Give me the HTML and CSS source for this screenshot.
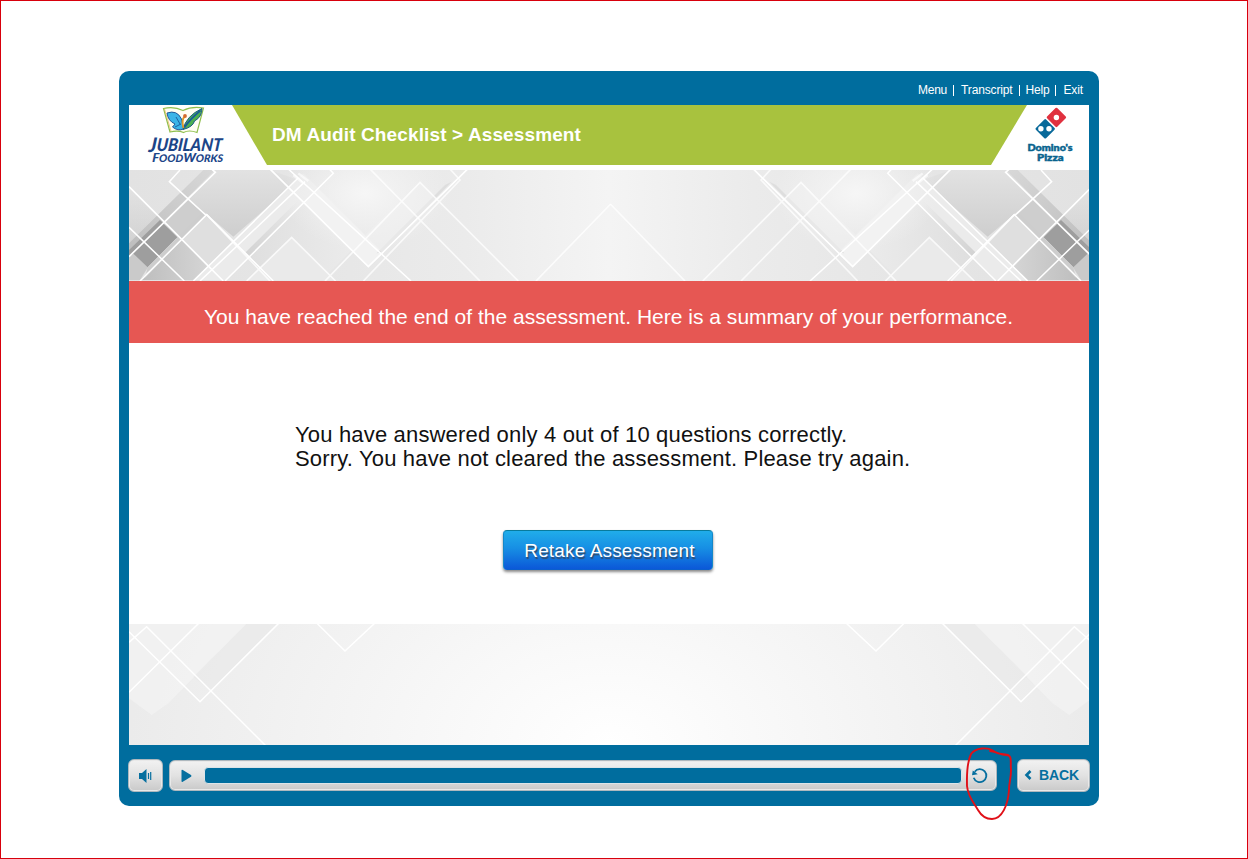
FILE: index.html
```
<!DOCTYPE html>
<html lang="en">
<head>
<meta charset="utf-8">
<title>DM Audit Checklist</title>
<link rel="stylesheet" href="styles.css">
</head>
<body>
<main class="page">
  <div class="player">
    <nav class="topnav">
      <span class="nav-menu">Menu</span><i></i><span class="nav-transcript">Transcript</span><i></i><span class="nav-help">Help</span><i></i><span class="nav-exit">Exit</span>
    </nav>
    <section class="stage">
      <header class="header">
        <svg class="logo-left" width="138" height="65" viewBox="129 105 138 65">
          <path d="M163.500 108.500Q174 106 183 110.500Q192 106 203.500 108L197 132.500Q189 129.500 183.500 132.500Q178 130 170 132Z" fill="#fffef2" stroke="#8fbf4d" stroke-width="1.200"/>
          <path d="M164.500 109L171 131" stroke="#e9b45b" stroke-width=".7"/>
          <path d="M167 113Q177 109.500 181.500 119L183.500 129Q178 131.500 172.500 127L175 124Q168 121 167 113Z" fill="#3bb4e8" stroke="#174b8d" stroke-width=".9"/>
          <path d="M176 117L180 124M175 127L181 124" stroke="#174b8d" stroke-width=".8"/>
          <path d="M183 129.500Q186 116 202 108.500Q202 117 194.500 121Q193 127 183 129.500Z" fill="#4caf50" stroke="#1a5a86" stroke-width="1"/>
          <path d="M184 128Q190 119 200.500 110.500" stroke="#175b98" stroke-width="1.700" fill="none"/>
          <path d="M183.500 128Q181 120 185 116" stroke="#dc9a2b" stroke-width="1.800" fill="none"/><circle cx="185" cy="116" r="1.900" fill="#d56a2d"/>
          <g class="jubilant">
            <text x="0" y="0" font-size="17.500" transform="translate(148.500 150.500) skewX(-6)" textLength="73" lengthAdjust="spacingAndGlyphs"><tspan font-size="20" dy="1.500">J</tspan><tspan dy="-1.500">UBILANT</tspan></text>
            <text x="0" y="0" font-size="12.500" transform="translate(152 161.800) skewX(-4)" textLength="71" lengthAdjust="spacingAndGlyphs">F<tspan font-size="10.500">OOD</tspan>W<tspan font-size="10.500">ORKS</tspan></text>
          </g>
        </svg>
        <div class="title-band"><h1>DM Audit Checklist &gt; Assessment</h1></div>
        <svg class="logo-right" width="98" height="65" viewBox="991 105 98 65">
          <rect x="-7.200" y="-7.200" width="14.400" height="14.400" rx="1.200" fill="#e0313f" transform="translate(1056.400 117.400) rotate(45)"/>
          <rect x="-7.200" y="-7.200" width="14.400" height="14.400" rx="1.200" fill="#08699a" transform="translate(1045.200 128.800) rotate(45)"/>
          <circle cx="1056.400" cy="117.500" r="2.700" fill="#fff"/><circle cx="1040.900" cy="128.800" r="2.700" fill="#fff"/><circle cx="1049" cy="128.800" r="2.700" fill="#fff"/>
          <g class="dominos"><text x="1027.500" y="150.500" textLength="45" lengthAdjust="spacingAndGlyphs">Domino's</text><text x="1037" y="160.500" textLength="26.500" lengthAdjust="spacingAndGlyphs">Pizza</text></g>
        </svg>
      </header>
      <svg class="pattern" width="960" height="111" viewBox="0 0 960 111">
        <defs>
          <linearGradient id="base"><stop offset="0" stop-color="#e2e2e2"/><stop offset=".2" stop-color="#e6e6e6"/><stop offset=".35" stop-color="#ebebeb"/><stop offset=".5" stop-color="#f4f4f4"/><stop offset=".65" stop-color="#ebebeb"/><stop offset=".8" stop-color="#e6e6e6"/><stop offset="1" stop-color="#e2e2e2"/></linearGradient>
          <linearGradient id="gray" x1="0" y1="0" x2="0" y2="1"><stop offset="0" stop-color="#e2e2e2"/><stop offset="1" stop-color="#cecece"/></linearGradient>
          <linearGradient id="edge" x1="1" y1="0" x2="0" y2="1"><stop offset="0" stop-color="#d8d8d8"/><stop offset="1" stop-color="#bcbcbc"/></linearGradient>
          <linearGradient id="beam" x1="1" y1="0" x2="0" y2="1"><stop offset="0" stop-color="#ececec"/><stop offset="1" stop-color="#d2d2d2"/></linearGradient>
          <linearGradient id="slab" x1="0" y1="0" x2="1" y2="0"><stop offset="0" stop-color="#dfdfdf"/><stop offset="1" stop-color="#ebebeb"/></linearGradient>
          <radialGradient id="shine"><stop offset="0" stop-color="#f6f6f6"/><stop offset="1" stop-color="#f5f5f5" stop-opacity="0"/></radialGradient>
          <linearGradient id="low" x1="0" y1="0" x2="0" y2="1"><stop offset="0" stop-color="#b6b6b6" stop-opacity="0"/><stop offset="1" stop-color="#b6b6b6"/></linearGradient>
          <linearGradient id="foot" x1="0" y1="0" x2="1" y2="0"><stop offset="0" stop-color="#bdbdbd"/><stop offset="1" stop-color="#dadada"/></linearGradient>
          <g id="half" transform="translate(-4 -5) scale(.33333)" fill="none" stroke="#fff" stroke-width="5">
            <g stroke="none">
              <path d="M12 70L117 175L12 280Z" fill="url(#low)" opacity=".45"/>
              <path d="M270 15H435L520 45L325 215L245 147L185 105Z" fill="url(#gray)"/>
              <path d="M12 235L235 15H270L12 275Z" fill="url(#edge)"/>
              <path d="M117 172L188 105L240 148L155 225Z" fill="#cecece"/>
              <path d="M12 270L25 265L70 305L45 345H12Z" fill="#cacaca"/>
              <path d="M45 345L170 222L290 345Z" fill="url(#foot)"/>
              <path d="M12 255L105 165L157 217L68 307L25 266L12 275Z" fill="#9e9e9e"/>
              <path d="M68 307L230 145L245 150L60 340Z" fill="#cdcdcd"/>
              <path d="M170 222L245 149L330 235L260 320Z" fill="#dfdfdf"/>
              <path d="M205 345L535 25L580 70L300 345Z" fill="#ebebeb"/>
              <path d="M375 275L535 115L680 255L590 345H445Z" fill="url(#slab)"/>
              <path d="M362 262L520 105L535 115L375 275Z" fill="url(#beam)"/>
              <ellipse cx="720" cy="85" rx="250" ry="170" fill="url(#shine)"/>
              <path d="M535 110L580 70L775 265L730 305Z" fill="#f2f2f2"/>
              <path d="M365 345L500 218L630 345Z" fill="#eaeaea"/>
              <path d="M755 265L960 60L980 50L775 262Z" fill="#dedede"/>
              <path d="M720 210L885 52L935 103L770 262Z" fill="#f1f1f1" opacity=".5"/>
            </g>
            <path d="M12 65L295 348M12 275L271 22L260 12M435 12L730 305L1028 12"/>
            <path d="M165 15L133 50L242 150M12 187L178 348M45 348L245 149L445 348M205 348L520 38M225 348L540 50M300 348L625 25L613 12M490 12L858 348" stroke-width="4.500"/>
            <path d="M245 149L435 348M365 348L500 217L632 348M600 348L885 52L1180 348M735 12L1065 348M715 348L1005 45L975 12M1233 348L1457 117" opacity=".75"/>
            <path d="M520 25L550 48M505 30L535 55" opacity=".6" stroke-width="7"/>
          </g>
        </defs>
        <rect width="960" height="111" fill="url(#base)"/>
        <use href="#half"/><use href="#half" transform="translate(963 0) scale(-1 1)"/>
      </svg>
      <div class="banner">You have reached the end of the assessment. Here is a summary of your performance.</div>
      <div class="result">
        <p class="line-one">You have answered only 4 out of 10 questions correctly.</p>
        <p class="line-two">Sorry. You have not cleared the assessment. Please try again.</p>
        <button class="retake">Retake Assessment</button>
      </div>
      <svg class="pattern" width="960" height="121" viewBox="0 0 960 121">
        <defs>
          <radialGradient id="glow" gradientUnits="userSpaceOnUse" cx="481" cy="121" r="480" gradientTransform="translate(0 36) scale(1 .7)"><stop offset="0" stop-color="#fff"/><stop offset=".4" stop-color="#f7f7f7"/><stop offset="1" stop-color="#ebebeb"/></radialGradient>
          <g id="lower" transform="translate(-4 -9) scale(.33333)" fill="none" stroke="#fff" stroke-width="4.500">
            <path d="M12 27H365L130 265L80 300L12 250Z" fill="#f3f3f3" stroke="none" opacity=".7"/>
            <path d="M365 27H460L260 227L205 185Z" fill="#e7e7e7" stroke="none" opacity=".5"/>
            <path d="M12 232L222 24M12 50L225 260L462 24M12 82L65 35L422 392M575 24L660 108L750 24"/>
          </g>
        </defs>
        <rect width="960" height="121" fill="url(#glow)"/>
        <use href="#lower"/><use href="#lower" transform="translate(963 0) scale(-1 1)"/>
      </svg>
    </section>
    <footer class="controls">
      <button class="control volume"><svg width="16" height="16" viewBox="0 0 16 16"><path d="M1 5H4L8.500 1V15L4 11H1Z" fill="#066f9f"/><path d="M10.500 5V11M12.700 4V12" stroke="#066f9f" stroke-width="1.200"/></svg></button>
      <div class="control seek">
        <svg class="play" width="11" height="14" viewBox="0 0 11 14"><path d="M.5 1.700Q.5.300 1.800 1L10 6Q11 7 10 7.700L1.800 12.700Q.5 13.300.5 12Z" fill="#066f9f"/></svg>
        <div class="track"></div>
        <svg class="replay" width="18" height="18" viewBox="0 0 18 18"><path d="M3.700 4.700A6.500 6.500 0 1 1 2.700 10.800" fill="none" stroke="#066f9f" stroke-width="1.800"/><path d="M1 8.300L1.800 3.500L6.800 7.200Z" fill="#066f9f"/></svg>
      </div>
      <button class="control back"><svg width="8" height="10" viewBox="0 0 8 10"><path d="M6.500 1L2.500 5L6.500 9" fill="none" stroke="#066f9f" stroke-width="2.600"/></svg><span>BACK</span></button>
    </footer>
  </div>
  <svg class="annotation" width="50" height="76" viewBox="965 746 50 76"><path d="M1008 755C1002 753 1000 755 995 752C988 746 975 748 971 754C966 765 967 777 967 786C968 797 974 803 978 810C982 817 987 819 992 819C1002 819 1008 805 1009 790C1009 782 1011 779 1011 770C1010 762 1013 755 1006 755C1000 755 998 752 990 751" fill="none" stroke="#e01018" stroke-width="1.900" stroke-linecap="round"/></svg>
</main>
</body>
</html>
```
FILE: styles.css
```
* { box-sizing: border-box; }
body { margin: 0; font-family: "Liberation Sans", Arial, sans-serif; background: #fff; }
.page { position: relative; width: 1248px; height: 859px; padding: 70px 0 0 118px; border: 1px solid #d8000c; overflow: hidden; }
.player { width: 980px; height: 735px; padding: 0 10px; background: #006d9e; border-radius: 10px; }
.topnav { height: 34px; padding: 4px 6px 0 0; display: flex; justify-content: flex-end; align-items: center; color: #fff; font-size: 12px; white-space: nowrap; }
.topnav i { width: 1px; height: 11px; margin: 1px 7px 0 6px; background: #fff; }
.nav-menu { letter-spacing: -.2px; }
.nav-transcript { letter-spacing: -.15px; }
.nav-help { margin-left: -1px; letter-spacing: -.2px; }
.nav-exit { letter-spacing: -.1px; }
.stage { width: 960px; height: 640px; background: #fff; }
.header { height: 65px; display: flex; }
.header svg, .pattern { display: block; }
.header svg { flex: none; }
.logo-left { margin-right: -35px; }
.logo-right { margin-left: -36px; }
.title-band { width: 795px; height: 60px; flex: none; padding: 19px 0 0 40px; background: #a8c23e; clip-path: polygon(0 0, 100% 0, 759px 100%, 35px 100%); }
.title-band h1 { margin: 0; color: #fff; font-size: 19px; line-height: 22px; letter-spacing: .12px; white-space: nowrap; }
.jubilant { font-family: Lato, sans-serif; font-weight: 900; font-style: italic; fill: #1c4588; }
.dominos { font-family: Lato, sans-serif; font-weight: 900; font-size: 10px; fill: #08638e; }
.dominos text { stroke: #08638e; stroke-width: .5px; }
.banner { height: 62px; padding: 9px 0 0 75px; background: #e65753; color: #fff; font-size: 21px; line-height: 54px; letter-spacing: .012px; white-space: nowrap; }
.result { height: 281px; padding: 80px 0 0 166px; color: #111; font-size: 22px; line-height: 24px; }
.result p { margin: 0; letter-spacing: .17px; white-space: nowrap; }
.retake { display: block; width: 210px; height: 40px; margin: 59px 0 0 208px; padding: 2px 0 0 3px; border: 1px solid #0878b2; border-color: #087b9d #1487c8 #0b5fcd; border-radius: 4px; background: linear-gradient(#20adea, #178fe4 45%, #0b58d8); box-shadow: 0 2px 3px #888; color: #fff; font: 19px "Liberation Sans", sans-serif; letter-spacing: .15px; text-shadow: 1px 2px 1px #344b68; white-space: nowrap; }
.controls { height: 61px; padding: 14px 0 0; display: flex; }
.control { border: 1px solid #aeb8be; border-radius: 6px; background: linear-gradient(#f2f2f2, #e2e2e2 50%, #c9c9c9); box-shadow: inset 0 0 0 1px #e9e9e9; flex: none; display: flex; align-items: center; }
.volume { width: 35px; height: 33px; margin-left: -1px; padding: 0 0 0 9px; }
.seek { width: 828px; height: 31px; margin: 1px 0 0 6px; padding-left: 11px; }
.track { width: 758px; height: 17px; margin: 0 9px 0 12px; border: 1px solid #dce4e8; border-radius: 4px; background: #006d9e; }
.back { width: 73px; height: 33px; margin: 0 0 0 20px; padding: 0 0 2px 6px; color: #066f9f; font: bold 14px "Liberation Sans", sans-serif; letter-spacing: -.1px; }
.back span { margin-left: 7px; }
.annotation { position: absolute; left: 964px; top: 745px; }
```
